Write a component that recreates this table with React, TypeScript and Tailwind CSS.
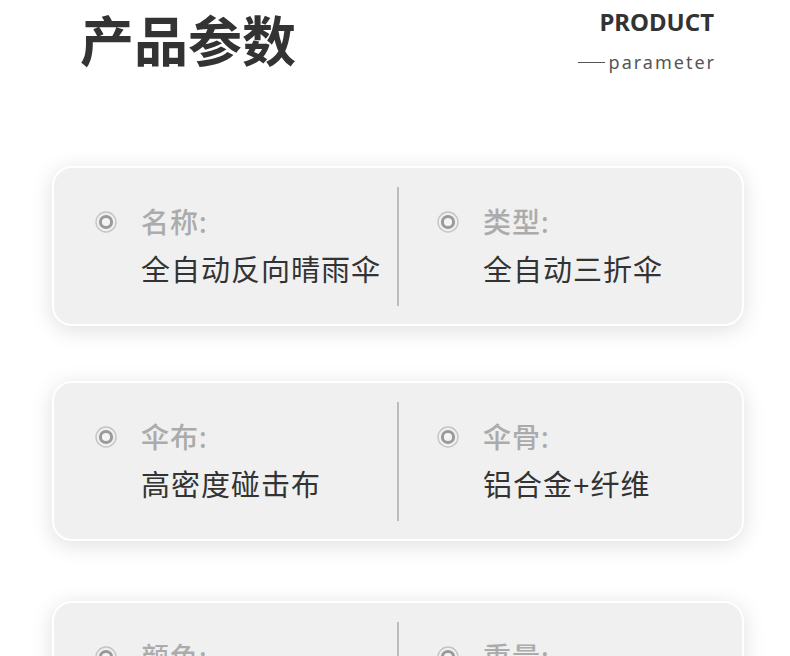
const rows = [
  [
    { label: '名称:', value: '全自动反向晴雨伞' },
    { label: '类型:', value: '全自动三折伞' },
  ],
  [
    { label: '伞布:', value: '高密度碰击布' },
    { label: '伞骨:', value: '铝合金+纤维' },
  ],
  [
    { label: '颜色:', value: '黑色' },
    { label: '重量:', value: '约350g' },
  ],
];

function RingIcon() {
  return (
    <svg width="22" height="22" viewBox="0 0 22 22" className="shrink-0">
      <circle cx="11" cy="11" r="10" fill="none" stroke="#c4c4c4" strokeWidth="1.4" />
      <circle cx="11" cy="11" r="5.6" fill="#f4f4f4" stroke="#9a9a9a" strokeWidth="3" />
    </svg>
  );
}

function Item({ label, value }: { label: string; value: string }) {
  return (
    <div>
      <div className="flex items-center h-[36px]">
        <RingIcon />
        <span className="ml-[24px] text-[28px] leading-[36px] tracking-[1px] text-[#ababab] font-medium">{label}</span>
      </div>
      <div className="mt-[12px] pl-[46px] text-[29px] leading-[36px] tracking-[1px] text-[#333333]">{value}</div>
    </div>
  );
}

export default function App() {
  return (
    <div
      className="w-[790px] h-[656px] overflow-hidden bg-white"
      style={{ fontFamily: '"Noto Sans", "Noto Sans CJK SC", sans-serif' }}
    >
      {/* header */}
      <div className="flex justify-between items-start pl-[80px] pr-[76px]">
        <h1 className="mt-[14px] text-[54px] leading-[54px] font-bold text-[#333333]">产品参数</h1>
        <div className="mt-[4px] flex flex-col items-end">
          <div className="text-[24px] leading-[36px] font-bold text-[#333333]">PRODUCT</div>
          <div className="mt-[10px] flex items-center">
            <span className="w-[27px] h-px bg-[#555555] mr-[4px]"></span>
            <span className="text-[18px] leading-[24px] tracking-[2px] text-[#555555] mr-[-2px]">parameter</span>
          </div>
        </div>
      </div>

      {/* cards */}
      <div className="pl-[52px] pr-[46px] mt-[92px]">
        {rows.map((row, i) => (
          <div
            key={i}
            className={`${i === 0 ? '' : i === 1 ? 'mt-[55px]' : 'mt-[60px]'} h-[160px] rounded-[20px] border-2 border-white bg-[#f0f0f0] shadow-[0_4px_22px_rgba(0,0,0,0.13)]`}
          >
            <div className="flex py-[19px]">
              <div className="w-[343px] shrink-0 pl-[41px] pt-[17px] h-[119px]">
                <Item {...row[0]} />
              </div>
              <div className="flex-1 pl-[38px] pt-[17px] h-[119px] border-l-2 border-[#bcbcbc]">
                <Item {...row[1]} />
              </div>
            </div>
          </div>
        ))}
      </div>
    </div>
  );
}
